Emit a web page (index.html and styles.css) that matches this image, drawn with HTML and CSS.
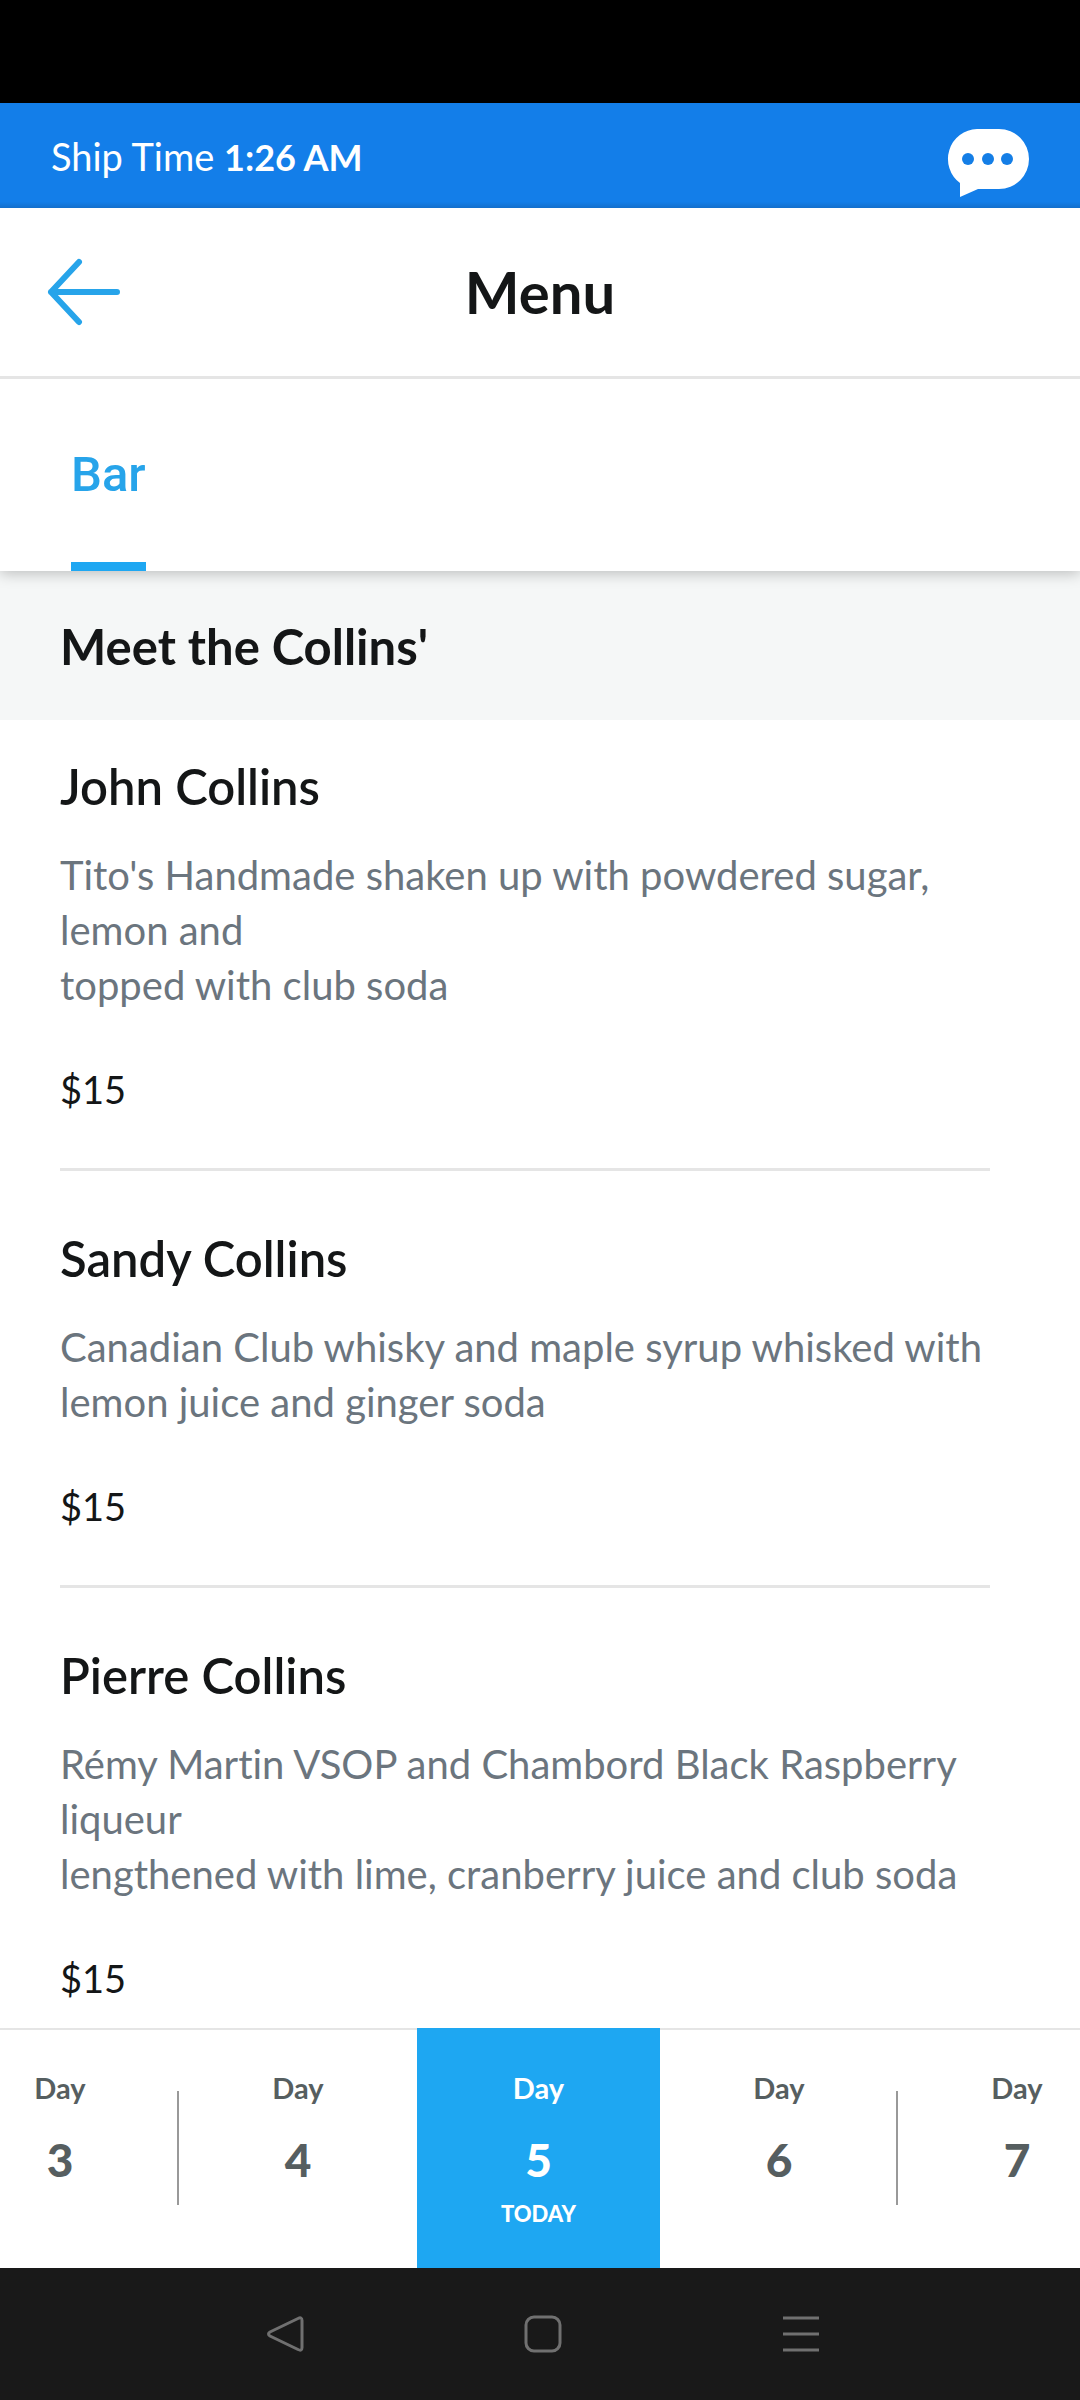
FILE: index.html
```html
<!DOCTYPE html>
<html lang="en">
<head>
  <meta charset="UTF-8" />
  <meta name="viewport" content="width=device-width, initial-scale=1.0" />
  <title>Menu</title>
  <link rel="stylesheet" href="styles.css">
</head>
<body>
  <div class="status-bar"></div>

  <div class="ship-bar">
    <div class="ship-time">Ship Time <strong>1:26 AM</strong></div>
    <button class="icon-button chat-button" aria-label="Chat">
      <svg width="82" height="70" viewBox="0 0 82 70">
        <path fill="#fff" d="M30 1H52A30 30 0 0 1 52 61H31L13 69V55A30 30 0 0 1 30 1Z" />
        <circle cx="21" cy="31" r="6" fill="#147ee6" />
        <circle cx="41" cy="31" r="6" fill="#147ee6" />
        <circle cx="60" cy="31" r="6" fill="#147ee6" />
      </svg>
    </button>
  </div>

  <header class="header">
    <button class="icon-button" aria-label="Back">
      <svg width="74" height="68" viewBox="0 0 74 68" fill="none" stroke="#27a4ea" stroke-width="6" stroke-linecap="round" stroke-linejoin="round">
        <path d="M33 4L5 34L33 64M5 34H71" />
      </svg>
    </button>
    <h1>Menu</h1>
  </header>

  <nav class="tabs">
    <button class="tab active">Bar</button>
  </nav>

  <main class="menu">
    <h2>Meet the Collins'</h2>
    <article class="drink">
      <h3>John Collins</h3>
      <p class="description">Tito's Handmade shaken up with powdered sugar, lemon and<br>topped with club soda</p>
      <p class="price">$15</p>
    </article>
    <article class="drink">
      <h3>Sandy Collins</h3>
      <p class="description">Canadian Club whisky and maple syrup whisked with lemon juice and ginger soda</p>
      <p class="price">$15</p>
    </article>
    <article class="drink">
      <h3>Pierre Collins</h3>
      <p class="description">Rémy Martin VSOP and Chambord Black Raspberry liqueur<br>lengthened with lime, cranberry juice and club soda</p>
      <p class="price">$15</p>
    </article>
  </main>

  <div class="days">
    <button class="day divided"><span>Day</span><b>3</b></button>
    <button class="day"><span>Day</span><b>4</b></button>
    <button class="day today"><span>Day</span><b>5</b><small>TODAY</small></button>
    <button class="day divided"><span>Day</span><b>6</b></button>
    <button class="day"><span>Day</span><b>7</b></button>
  </div>

  <div class="system-nav">
    <button class="icon-button" aria-label="System back">
      <svg width="40" height="40" viewBox="0 0 40 40">
        <path d="M33 4.500Q37 2.500 37 6.500V33.500Q37 37.500 33 35.500L5 22Q2 20 5 18Z" />
      </svg>
    </button>
    <button class="icon-button" aria-label="Home">
      <svg width="40" height="40" viewBox="0 0 40 40">
        <rect x="3" y="3" width="34" height="34" rx="8" />
      </svg>
    </button>
    <button class="icon-button" aria-label="Recent apps">
      <svg width="40" height="40" viewBox="0 0 40 40">
        <path d="M2 4H38M2 20H38M2 36H38" />
      </svg>
    </button>
  </div>
</body>
</html>
```
FILE: styles.css
```css
* {
  box-sizing: border-box;
}
body {
  margin: 0;
  height: 100vh;
  display: flex;
  flex-direction: column;
  background: #fff;
  color: #141617;
  font-family: Lato, 'Open Sans', sans-serif;
  font-variant-ligatures: none;
}
button {
  border: none;
  padding: 0;
  background: none;
  font-family: inherit;
  color: inherit;
  cursor: pointer;
}
h1, h2, h3, p {
  margin: 0;
}
.icon-button {
  display: flex;
}
.status-bar {
  flex: 0 0 103px;
  background: #000;
}
.ship-bar {
  flex: 0 0 105px;
  display: flex;
  justify-content: space-between;
  align-items: center;
  padding: 0 51px;
  background: linear-gradient(#137ee9 94%, #136fcc);
  color: #fff;
  font-size: 38px;
}
.ship-time strong {
  font-size: 36px;
}
.chat-button {
  margin-top: 14px;
}
.header {
  flex: 0 0 171px;
  display: grid;
  grid-template-columns: 74px 1fr 74px;
  align-items: center;
  padding: 0 46px;
  border-bottom: 3px solid #e5e5e5;
  background: #fff;
  position: relative;
  z-index: 2;
}
h1 {
  font-size: 58px;
  font-weight: 700;
  line-height: 68px;
  text-align: center;
}
.tabs {
  flex: 0 0 192px;
  display: flex;
  padding: 0 71px;
  box-shadow: 0 2px 14px rgba(0, 0, 0, 0.25);
  position: relative;
  z-index: 1;
}
.tab {
  border-bottom: 9px solid transparent;
  padding-top: 7px;
  font-family: Roboto, sans-serif;
  font-size: 49px;
  font-weight: 500;
}
.tab.active {
  color: #27a4ea;
  border-bottom-color: #1ea7f2;
}
.menu {
  flex: 1;
  min-height: 0;
  overflow-y: auto;
  scrollbar-width: none;
}
h2 {
  padding: 47px 60px 46px;
  background: #f5f7f7;
  font-size: 49px;
  font-weight: 700;
  line-height: 56px;
}
.drink {
  margin: 0 90px 0 60px;
  padding: 59px 0 51px;
  border-bottom: 3px solid #e5e5e5;
}
h2 + .drink {
  padding-top: 38px;
}
h3 {
  font-size: 49px;
  font-weight: 600;
  line-height: 56px;
}
.description {
  margin: 34px 0 49px;
  color: #6b757e;
  font-size: 40px;
  line-height: 55px;
}
.price {
  font-size: 38px;
  line-height: 55px;
}
.days {
  flex: 0 0 240px;
  display: flex;
  justify-content: center;
  overflow: hidden;
  padding-right: 3px;
  background: linear-gradient(#e5e5e5 2px, #fff 2px);
  color: #565e60;
}
.day {
  flex: 0 0 238px;
  display: flex;
  flex-direction: column;
  align-items: center;
  padding-top: 42px;
  position: relative;
}
.day span {
  font-size: 29px;
  font-weight: 700;
  line-height: 36px;
}
.day b {
  margin-top: 26px;
  font-size: 46px;
  font-weight: 900;
  line-height: 56px;
}
.day small {
  margin-top: 12px;
  font-size: 22px;
  font-weight: 900;
  line-height: 28px;
}
.day.divided::after {
  content: '';
  position: absolute;
  top: 63px;
  right: 0;
  width: 2px;
  height: 114px;
  background: #999;
}
.day.today {
  flex-basis: 243px;
  background: #1ea7f2;
  color: #fff;
}
.system-nav {
  flex: 0 0 132px;
  display: flex;
  justify-content: center;
  align-items: center;
  gap: 218px;
  padding-left: 6px;
  background: #191919;
}
.system-nav svg {
  fill: none;
  stroke: #707070;
  stroke-width: 3;
}
```
